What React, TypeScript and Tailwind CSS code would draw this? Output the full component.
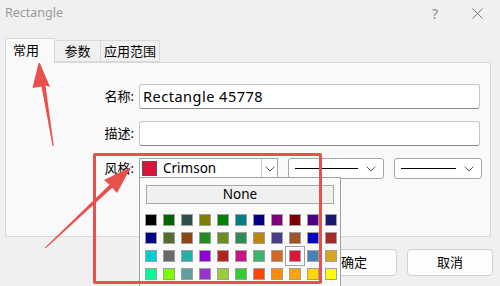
import React from "react";

const COLORS: string[][] = [
  ["#000000", "#006400", "#2f4f4f", "#808000", "#008000", "#008080", "#000080", "#800080", "#800000", "#4b0082", "#191970"],
  ["#00008b", "#556b2f", "#8b4513", "#228b22", "#6b8e23", "#2e8b57", "#b8860b", "#483d8b", "#a0522d", "#0000cd", "#a52a2a"],
  ["#00ced1", "#696969", "#20b2aa", "#9400d3", "#b22222", "#c71585", "#3cb371", "#d2691e", "#dc143c", "#4682b4", "#daa520"],
  ["#00fa9a", "#7cfc00", "#5f9ea0", "#9932cc", "#9acd32", "#32cd32", "#ff4500", "#ff8c00", "#ffa500", "#ffd700", "#ffff00"],
];

function Chevron() {
  return (
    <svg width="10" height="6" viewBox="0 0 10 6">
      <path d="M0.5 0.5 L5 5 L9.5 0.5" fill="none" stroke="#606060" strokeWidth="1" />
    </svg>
  );
}

function LineCombo({ w }: { w: string }) {
  return (
    <div className={`${w} h-[21px] bg-white border border-[#a6a6a6] rounded-[3px] flex items-center pl-[6px] pr-[7px] gap-[8px]`}>
      <div className="flex-1 h-[1.5px] bg-black" />
      <Chevron />
    </div>
  );
}

export default function App() {
  return (
    <div className="w-[500px] h-[286px] bg-[#f0f0f0] relative overflow-hidden font-['Noto_Sans','Noto_Sans_CJK_SC',sans-serif] text-black">
      {/* title bar */}
      <div className="h-[27px] flex items-center pl-[5px] pr-[17px]">
        <span className="text-[12.5px] text-[#9a9a9a] leading-none">Rectangle</span>
        <span className="ml-auto text-[14px] text-[#8a8a8a] leading-none mr-[34px]">?</span>
        <svg width="11" height="11" viewBox="0 0 11 11">
          <path d="M0.5 0.5 L10.5 10.5 M10.5 0.5 L0.5 10.5" stroke="#7a7a7a" strokeWidth="1" />
        </svg>
      </div>

      {/* tabs */}
      <div className="flex items-end pl-[5px] h-[35px] pt-[10px]">
        <div className="w-[50px] h-[25px] bg-[#f9f9f9] border border-b-0 border-[#d9d9d9] flex items-start pt-[3px] pl-[7px] text-[13px] leading-[16px] relative z-10 -mb-px">
          常用
        </div>
        <div className="w-[46px] h-[22px] bg-[#f0f0f0] border border-l-0 border-[#d9d9d9] flex items-center justify-center text-[13px] leading-none">
          参数
        </div>
        <div className="w-[59px] h-[22px] bg-[#f0f0f0] border border-l-0 border-[#d9d9d9] flex items-center justify-center text-[13px] leading-none">
          应用范围
        </div>
      </div>

      {/* panel */}
      <div className="ml-[5px] w-[486px] h-[175px] bg-[#f9f9f9] border border-[#d9d9d9] pt-[21px] flex flex-col gap-[12px]">
        <div className="flex items-center">
          <div className="w-[130px] text-right text-[13px] pr-[2px]">名称:</div>
          <div className="ml-[3px] w-[341px] h-[25px] bg-white border border-[#c4c4c4] border-b-[#8a8a8a] rounded-[3px] flex items-center pl-[3px] text-[14.5px] tracking-[0.5px]">
            Rectangle 45778
          </div>
        </div>
        <div className="flex items-center">
          <div className="w-[130px] text-right text-[13px] pr-[2px]">描述:</div>
          <div className="ml-[3px] w-[341px] h-[25px] bg-white border border-[#c4c4c4] border-b-[#8a8a8a] rounded-[3px]" />
        </div>
        <div className="flex items-center">
          <div className="w-[130px] text-right text-[13px] pr-[2px]">风格:</div>
          <div className="ml-[3px] w-[139px] h-[21px] bg-white border border-[#a6a6a6] flex items-stretch">
            <div className="flex-1 flex items-center pl-[2px] gap-[6px]">
              <div className="w-[15px] h-[15px] bg-[#dc143c] border border-[#555]" />
              <span className="text-[13.5px] leading-none">Crimson</span>
            </div>
            <div className="w-[16px] border-l border-[#c8c8c8] flex items-center justify-center">
              <Chevron />
            </div>
          </div>
          <div className="ml-[10px]">
            <LineCombo w="w-[96px]" />
          </div>
          <div className="ml-[10px]">
            <LineCombo w="w-[88px]" />
          </div>
        </div>
      </div>

      {/* buttons */}
      <div className="flex justify-end gap-[10px] pr-[7px] mt-[12px]">
        <div className="w-[86px] h-[27px] bg-[#fdfdfd] border border-[#d0d0d0] rounded-[4px] flex items-center justify-center text-[13px]">确定</div>
        <div className="w-[86px] h-[27px] bg-[#fdfdfd] border border-[#d0d0d0] rounded-[4px] flex items-center justify-center text-[13px]">取消</div>
      </div>

      {/* color dropdown popup */}
      <div className="absolute left-[139px] top-[177px] w-[202px] h-[130px] bg-[#fafafa] border border-[#a0a0a0] pt-[7px] px-[6px]">
        <div className="h-[19px] bg-[#f0f0f0] border border-[#a8a8a8] flex items-center justify-center text-[13.5px] leading-none">
          None
        </div>
        <div className="mt-[10px] grid grid-cols-[repeat(11,12px)] gap-[6px] -ml-[1px]">
          {COLORS.flatMap((row, r) =>
            row.map((c, i) => (
              <div
                key={`${r}-${i}`}
                className={
                  "w-[12px] h-[12px] border border-[#a0a0a0]" +
                  (r === 2 && i === 8 ? " shadow-[0_0_0_3px_#ffffff,0_0_0_4px_#a0a0a0]" : "")
                }
                style={{ backgroundColor: c }}
              />
            ))
          )}
        </div>
      </div>

      {/* red highlight box */}
      <div className="absolute left-[93px] top-[153px] w-[229px] h-[131px] border-[3.5px] border-[#e4514e] rounded-[2px]" />

      {/* arrows */}
      <svg className="absolute left-0 top-0 pointer-events-none" width="500" height="286" viewBox="0 0 500 286">
        <path d="M39 61 L50 87 L45.5 85.5 L53.8 146 L52.6 146 L41.5 86.5 L32.5 88 Z" fill="#e8504b" />
        <path d="M131 167 L117 193 L112.2 187.8 L45.5 248.5 L44.8 247.8 L109.5 184.8 L104 180 Z" fill="#e8504b" />
      </svg>
    </div>
  );
}
